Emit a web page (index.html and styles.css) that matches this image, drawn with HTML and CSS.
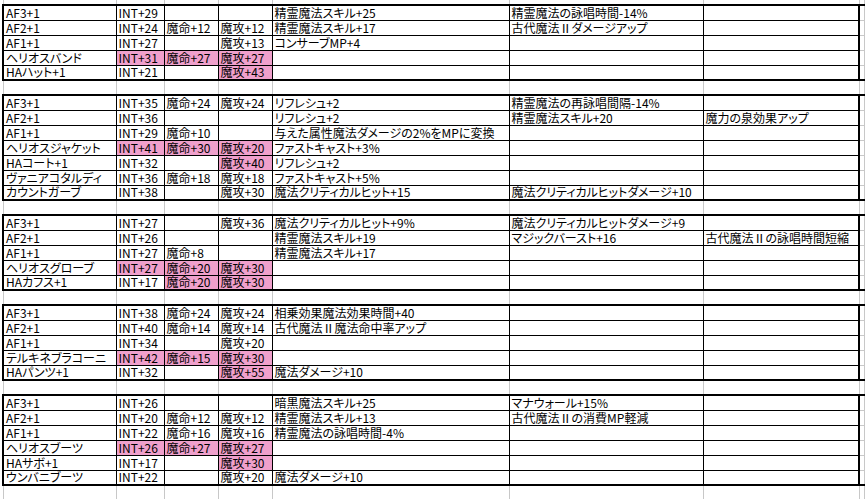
FILE: index.html
```html
<!DOCTYPE html>
<html lang="ja">
<head>
<meta charset="utf-8">
<title>装備比較</title>
<link rel="stylesheet" href="styles.css">
</head>
<body>
<table class="sheet">
<colgroup>
<col class="c-a"><col class="c-b"><col class="c-c"><col class="c-d"><col class="c-e"><col class="c-f"><col class="c-g"><col class="c-h">
</colgroup>
<tbody class="gap top">
<tr><td></td><td></td><td></td><td></td><td></td><td></td><td></td><td class="x"></td></tr>
</tbody>
<tbody class="sec">
<tr><td>AF3+1</td><td>INT+29</td><td></td><td></td><td>精霊魔法スキル+25</td><td>精霊魔法の詠唱時間-14%</td><td></td><td class="x"></td></tr>
<tr><td>AF2+1</td><td>INT+24</td><td>魔命+12</td><td>魔攻+12</td><td>精霊魔法スキル+17</td><td>古代魔法Ⅱダメージアップ</td><td></td><td class="x"></td></tr>
<tr><td>AF1+1</td><td>INT+27</td><td></td><td>魔攻+13</td><td>コンサーブMP+4</td><td></td><td></td><td class="x"></td></tr>
<tr><td>ヘリオスバンド</td><td class="hl">INT+31</td><td class="hl">魔命+27</td><td class="hl">魔攻+27</td><td></td><td></td><td></td><td class="x"></td></tr>
<tr><td>HAハット+1</td><td>INT+21</td><td></td><td class="hl">魔攻+43</td><td></td><td></td><td></td><td class="x"></td></tr>
</tbody>
<tbody class="gap">
<tr><td></td><td></td><td></td><td></td><td></td><td></td><td></td><td class="x"></td></tr>
</tbody>
<tbody class="sec">
<tr><td>AF3+1</td><td>INT+35</td><td>魔命+24</td><td>魔攻+24</td><td>リフレシュ+2</td><td>精霊魔法の再詠唱間隔-14%</td><td></td><td class="x"></td></tr>
<tr><td>AF2+1</td><td>INT+36</td><td></td><td></td><td>リフレシュ+2</td><td>精霊魔法スキル+20</td><td>魔力の泉効果アップ</td><td class="x"></td></tr>
<tr><td>AF1+1</td><td>INT+29</td><td>魔命+10</td><td></td><td>与えた属性魔法ダメージの2%をMPに変換</td><td></td><td></td><td class="x"></td></tr>
<tr><td>ヘリオスジャケット</td><td class="hl">INT+41</td><td class="hl">魔命+30</td><td class="hl">魔攻+20</td><td>ファストキャスト+3%</td><td></td><td></td><td class="x"></td></tr>
<tr><td>HAコート+1</td><td>INT+32</td><td></td><td class="hl">魔攻+40</td><td>リフレシュ+2</td><td></td><td></td><td class="x"></td></tr>
<tr><td>ヴァニアコタルディ</td><td>INT+36</td><td>魔命+18</td><td>魔攻+18</td><td>ファストキャスト+5%</td><td></td><td></td><td class="x"></td></tr>
<tr><td>カウントガーブ</td><td>INT+38</td><td></td><td>魔攻+30</td><td>魔法クリティカルヒット+15</td><td>魔法クリティカルヒットダメージ+10</td><td></td><td class="x"></td></tr>
</tbody>
<tbody class="gap">
<tr><td></td><td></td><td></td><td></td><td></td><td></td><td></td><td class="x"></td></tr>
</tbody>
<tbody class="sec">
<tr><td>AF3+1</td><td>INT+27</td><td></td><td>魔攻+36</td><td>魔法クリティカルヒット+9%</td><td>魔法クリティカルヒットダメージ+9</td><td></td><td class="x"></td></tr>
<tr><td>AF2+1</td><td>INT+26</td><td></td><td></td><td>精霊魔法スキル+19</td><td>マジックバースト+16</td><td>古代魔法Ⅱの詠唱時間短縮</td><td class="x"></td></tr>
<tr><td>AF1+1</td><td>INT+27</td><td>魔命+8</td><td></td><td>精霊魔法スキル+17</td><td></td><td></td><td class="x"></td></tr>
<tr><td>ヘリオスグローブ</td><td class="hl">INT+27</td><td class="hl">魔命+20</td><td class="hl">魔攻+30</td><td></td><td></td><td></td><td class="x"></td></tr>
<tr><td>HAカフス+1</td><td>INT+17</td><td class="hl">魔命+20</td><td class="hl">魔攻+30</td><td></td><td></td><td></td><td class="x"></td></tr>
</tbody>
<tbody class="gap">
<tr><td></td><td></td><td></td><td></td><td></td><td></td><td></td><td class="x"></td></tr>
</tbody>
<tbody class="sec">
<tr><td>AF3+1</td><td>INT+38</td><td>魔命+24</td><td>魔攻+24</td><td>相乗効果魔法効果時間+40</td><td></td><td></td><td class="x"></td></tr>
<tr><td>AF2+1</td><td>INT+40</td><td>魔命+14</td><td>魔攻+14</td><td>古代魔法Ⅱ魔法命中率アップ</td><td></td><td></td><td class="x"></td></tr>
<tr><td>AF1+1</td><td>INT+34</td><td></td><td>魔攻+20</td><td></td><td></td><td></td><td class="x"></td></tr>
<tr><td>テルキネブラコーニ</td><td class="hl">INT+42</td><td class="hl">魔命+15</td><td class="hl">魔攻+30</td><td></td><td></td><td></td><td class="x"></td></tr>
<tr><td>HAパンツ+1</td><td>INT+32</td><td></td><td class="hl">魔攻+55</td><td>魔法ダメージ+10</td><td></td><td></td><td class="x"></td></tr>
</tbody>
<tbody class="gap">
<tr><td></td><td></td><td></td><td></td><td></td><td></td><td></td><td class="x"></td></tr>
</tbody>
<tbody class="sec">
<tr><td>AF3+1</td><td>INT+26</td><td></td><td></td><td>暗黒魔法スキル+25</td><td>マナウォール+15%</td><td></td><td class="x"></td></tr>
<tr><td>AF2+1</td><td>INT+20</td><td>魔命+12</td><td>魔攻+12</td><td>精霊魔法スキル+13</td><td>古代魔法Ⅱの消費MP軽減</td><td></td><td class="x"></td></tr>
<tr><td>AF1+1</td><td>INT+22</td><td>魔命+16</td><td>魔攻+16</td><td>精霊魔法の詠唱時間-4%</td><td></td><td></td><td class="x"></td></tr>
<tr><td>ヘリオスブーツ</td><td class="hl">INT+26</td><td class="hl">魔命+27</td><td class="hl">魔攻+27</td><td></td><td></td><td></td><td class="x"></td></tr>
<tr><td>HAサボ+1</td><td>INT+17</td><td></td><td class="hl">魔攻+30</td><td></td><td></td><td></td><td class="x"></td></tr>
<tr><td>ウンバニブーツ</td><td>INT+22</td><td></td><td>魔攻+20</td><td>魔法ダメージ+10</td><td></td><td></td><td class="x"></td></tr>
</tbody>
<tbody class="gap">
<tr><td></td><td></td><td></td><td></td><td></td><td></td><td></td><td class="x"></td></tr>
</tbody>
</table>
</body>
</html>
```

FILE: styles.css
```css
html, body {
  margin: 0;
  padding: 0;
  background: #ffffff;
}

.sheet {
  border-collapse: collapse;
  table-layout: fixed;
  width: 861px;
  margin-left: 2px;
  font-family: "Noto Sans CJK JP", "Liberation Sans", sans-serif;
  font-size: 12px;
  font-feature-settings: "palt";
  color: #000;
}

.c-a { width: 113px; }
.c-b { width: 48px; }
.c-c { width: 54px; }
.c-d { width: 54px; }
.c-e { width: 237px; }
.c-f { width: 194px; }
.c-g { width: 156px; }
.c-h { width: 5px; }

.sheet tr {
  height: 15px;
}

.sheet td {
  padding: 0 0 0 2px;
  line-height: 12px;
  white-space: nowrap;
  vertical-align: middle;
}

.sec td {
  border: 1px solid #000;
}

.sec tr:first-child td {
  border-top: 2px solid #000;
}

.sec tr:last-child td {
  border-bottom: 2px solid #000;
}

.sec td:first-child {
  border-left: 2px solid #000;
}

.sec td:nth-child(7) {
  border-right: 2px solid #000;
}

.sec td.x,
.gap td {
  border: 1px solid #c8c8c8;
}

.gap.top tr {
  height: 5px;
}

.gap.top td {
  line-height: 0;
  border-top: 0;
}

.sec td.hl {
  background: #f0a0cc;
}
```
